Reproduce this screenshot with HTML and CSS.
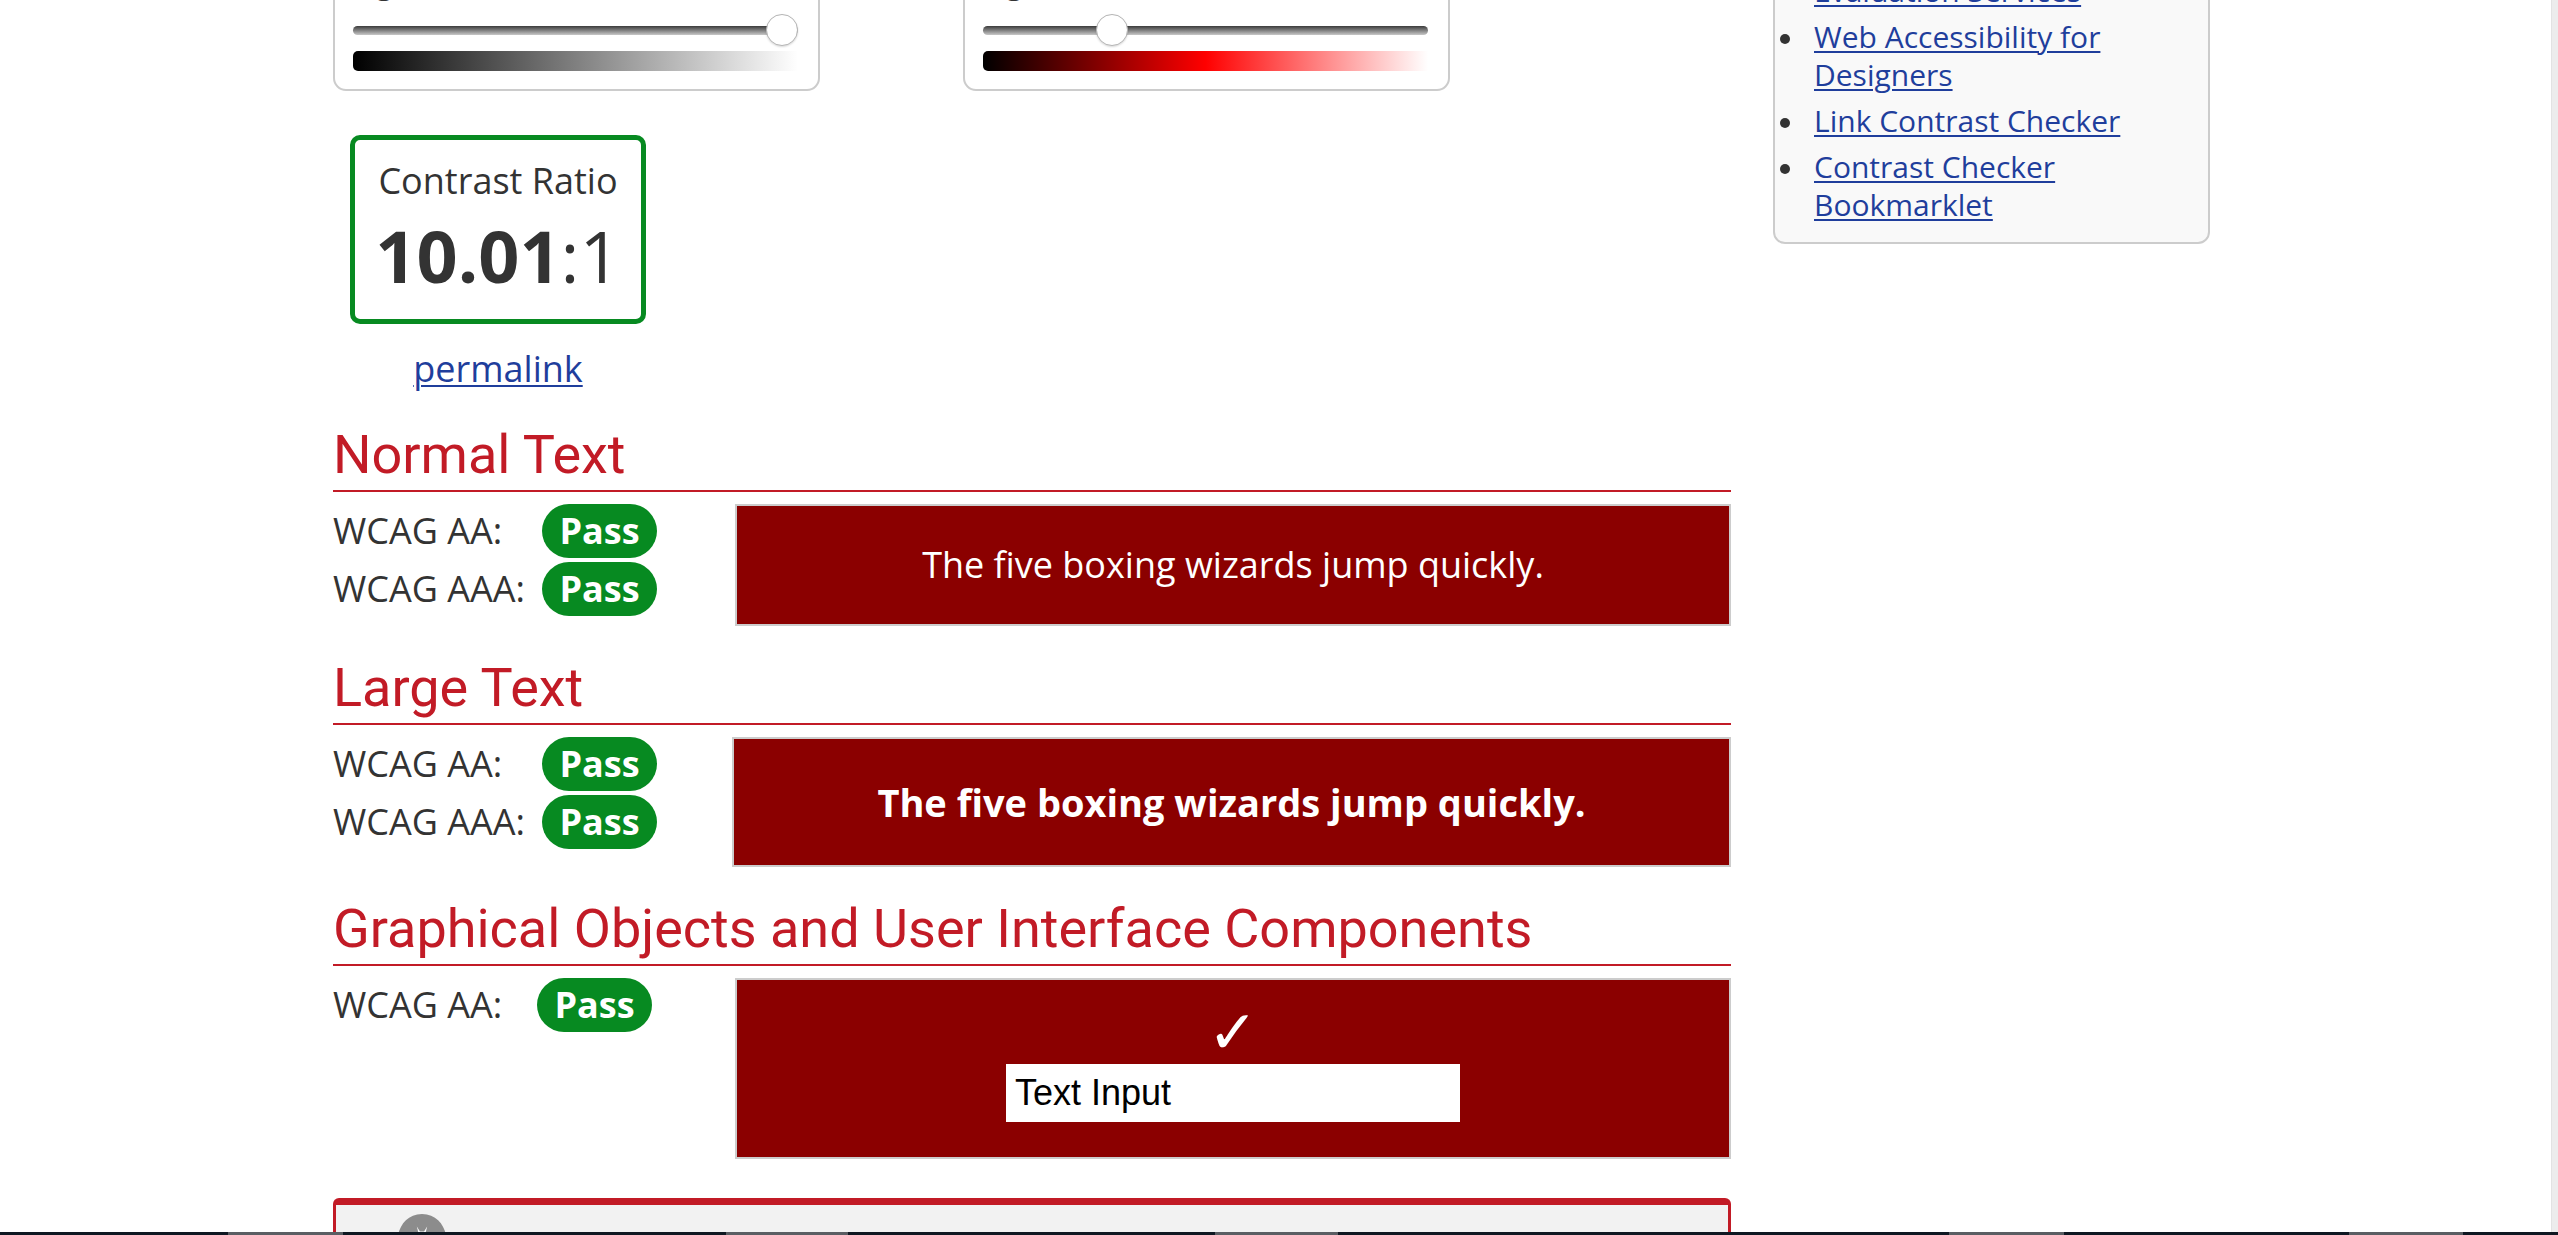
FILE: index.html
```html
<!DOCTYPE html>
<html lang="en">
<head>
<meta charset="utf-8">
<title>Contrast Checker</title>
<link rel="stylesheet" href="styles.css">
</head>
<body>
<div class="layout">
  <main class="main">
    <div class="pickers">
      <div class="picker">
        <div class="picker-label">Lightness</div>
        <div class="track"><span class="thumb" style="left: calc((100% - 32px) * 1)"></span></div>
        <div class="ramp ramp-gray"></div>
      </div>
      <div class="picker">
        <div class="picker-label">Lightness</div>
        <div class="track"><span class="thumb" style="left: calc((100% - 32px) * 0.273)"></span></div>
        <div class="ramp ramp-red"></div>
      </div>
    </div>

    <div class="result">
      <div class="ratio-box">
        <div class="ratio-label">Contrast Ratio</div>
        <div class="ratio-value"><b>10.01</b>:1</div>
      </div>
      <a class="permalink" href="#">permalink</a>
    </div>

    <section class="check check-first">
      <h2 class="check-title">Normal Text</h2>
      <div class="check-row">
        <div class="levels">
          <span class="level-name">WCAG AA:</span><span class="pass">Pass</span>
          <span class="level-name">WCAG AAA:</span><span class="pass">Pass</span>
        </div>
        <div class="sample sample-normal">The five boxing wizards jump quickly.</div>
      </div>
    </section>

    <section class="check">
      <h2 class="check-title">Large Text</h2>
      <div class="check-row">
        <div class="levels">
          <span class="level-name">WCAG AA:</span><span class="pass">Pass</span>
          <span class="level-name">WCAG AAA:</span><span class="pass">Pass</span>
        </div>
        <div class="sample sample-large">The five boxing wizards jump quickly.</div>
      </div>
    </section>

    <section class="check">
      <h2 class="check-title">Graphical Objects and User Interface Components</h2>
      <div class="check-row">
        <div class="levels levels-single">
          <span class="level-name">WCAG AA:</span><span class="pass">Pass</span>
        </div>
        <div class="sample sample-ui">
          <div class="sample-check">&#10003;</div>
          <div class="sample-input">Text Input</div>
        </div>
      </div>
    </section>

    <div class="notice">
      <span class="notice-icon">
        <svg width="50" height="58" viewBox="0 0 48 56" aria-hidden="true">
          <path d="M24 0 C8 0 0 14 0 28 C0 44 10 56 24 56 C38 56 48 44 48 28 C48 14 40 0 24 0 Z" fill="#8c8c8c"/>
          <path d="M19 12 L22 24 L26 24 L29 12 L26 17 L22 17 Z" fill="#ffffff"/>
        </svg>
      </span>
    </div>
  </main>

  <aside class="aside">
    <ul class="links">
      <li><a href="#">Web Accessibility Evaluation Services</a></li>
      <li><a href="#">Web Accessibility for Designers</a></li>
      <li><a href="#">Link Contrast Checker</a></li>
      <li><a href="#">Contrast Checker Bookmarklet</a></li>
    </ul>
  </aside>
</div>

<div class="dock">
  <span class="dock-item dock-a"></span>
  <span class="dock-item dock-b"></span>
  <span class="dock-item dock-c"></span>
  <span class="dock-item dock-d"></span>
  <span class="dock-item dock-e"></span>
</div>
<div class="scrollbar"></div>
</body>
</html>
```

FILE: styles.css
```css
html, body {
  margin: 0;
  padding: 0;
  height: 100%;
  overflow: hidden;
  background: #ffffff;
}

body {
  font-family: "Open Sans", "Noto Sans", sans-serif;
  color: #333333;
  font-size: 36px;
}

a {
  color: #1f3e9c;
  text-decoration: underline;
  text-underline-offset: 3px;
  text-decoration-thickness: 2px;
}

.layout {
  display: flex;
  align-items: flex-start;
  gap: 42px;
  padding-left: 333px;
  margin-top: -78px;
}

.main {
  width: 1398px;
  flex: none;
  padding-top: 38px;
}

/* ---------- color pickers ---------- */
.pickers {
  display: flex;
  gap: 143px;
}

.picker {
  box-sizing: border-box;
  width: 487px;
  border: 2px solid #cccccc;
  border-radius: 13px;
  padding: 0 20px 18px 18px;
}

.picker-label {
  font-size: 30px;
  line-height: 42px;
}

.track {
  position: relative;
  margin-top: 22px;
  height: 9px;
  border-radius: 5px;
  background: linear-gradient(to bottom, #3c3c3c 0%, #7a7a7a 45%, #c8c8c8 100%);
}

.thumb {
  position: absolute;
  top: -12px;
  width: 32px;
  height: 32px;
  box-sizing: border-box;
  border-radius: 50%;
  background: #ffffff;
  border: 1px solid #b5b5b5;
  box-shadow: 0 1px 2px rgba(0, 0, 0, 0.15);
}

.ramp {
  margin-top: 16px;
  height: 20px;
  border-radius: 5px 0 0 5px;
}

.ramp-gray {
  background: linear-gradient(to right, #000000, #ffffff);
}

.ramp-red {
  background: linear-gradient(to right, #000000, #ff0000 50%, #ffffff);
}

/* ---------- ratio ---------- */
.result {
  width: 296px;
  margin: 44px 0 0 17px;
  display: flex;
  flex-direction: column;
  align-items: center;
}

.ratio-box {
  box-sizing: border-box;
  width: 296px;
  border: 5px solid #078a21;
  border-radius: 10px;
  padding: 16px 0 24px;
  text-align: center;
}

.ratio-label {
  font-size: 36px;
  line-height: 50px;
}

.ratio-value {
  margin-top: 9px;
  font-size: 72px;
  line-height: 80px;
}

.ratio-value b {
  font-weight: 700;
}

.permalink {
  margin-top: 20px;
  font-size: 36px;
  line-height: 50px;
}

/* ---------- checks ---------- */
.check {
  margin-top: 30px;
}

.check-first {
  margin-top: 29px;
}

.check-title {
  margin: 0;
  font-family: Roboto, "Open Sans", sans-serif;
  font-weight: 400;
  font-size: 54px;
  line-height: 64px;
  color: #c21b26;
  padding-bottom: 3px;
  border-bottom: 2px solid #c21b26;
}

.check-row {
  display: flex;
  align-items: flex-start;
  padding-top: 12px;
}

.levels {
  display: grid;
  grid-template-columns: 209px auto;
  row-gap: 4px;
  align-items: center;
}

.levels-single {
  grid-template-columns: 204px auto;
}

.level-name {
  font-size: 36px;
  line-height: 54px;
  white-space: nowrap;
}

.pass {
  box-sizing: border-box;
  display: inline-block;
  width: 115px;
  height: 54px;
  line-height: 54px;
  border-radius: 27px;
  background: #078a21;
  color: #ffffff;
  font-weight: 700;
  font-size: 36px;
  text-align: center;
}

.sample {
  box-sizing: border-box;
  width: 996px;
  margin-left: auto;
  background: #8b0000;
  border: 2px solid #cccccc;
  color: #ffffff;
  text-align: center;
}

.sample-normal {
  padding: 34px 0;
  font-size: 36px;
  line-height: 50px;
}

.sample-large {
  width: 999px;
  padding: 37px 0;
  font-size: 38px;
  line-height: 52px;
  font-weight: 700;
}

.sample-ui {
  padding: 30px 0 35px;
  display: flex;
  flex-direction: column;
  align-items: center;
}

.sample-check {
  font-family: "DejaVu Sans", sans-serif;
  font-size: 60px;
  line-height: 44px;
  height: 44px;
  margin-left: 0;
}

.sample-input {
  box-sizing: border-box;
  margin-top: 10px;
  width: 454px;
  height: 58px;
  padding: 0 9px;
  background: #ffffff;
  color: #000000;
  text-align: left;
  font-family: "Liberation Sans", Arial, sans-serif;
  font-size: 36px;
  line-height: 58px;
}

/* ---------- notice ---------- */
.notice {
  margin-top: 39px;
  border: 3px solid #c21b26;
  border-top-width: 7px;
  border-bottom: 0;
  border-radius: 6px 6px 0 0;
  background: #f2f2f2;
  padding: 9px 0 60px 61px;
}

.notice-icon {
  display: block;
  width: 50px;
  height: 58px;
}

/* ---------- sidebar ---------- */
.aside {
  box-sizing: border-box;
  width: 437px;
  flex: none;
  background: #f9f9f9;
  border: 2px solid #cccccc;
  border-radius: 12px;
  padding: 10px 34px 18px 0;
}

.links {
  margin: 0;
  padding: 0 0 0 39px;
  list-style: none;
  font-size: 30px;
  line-height: 38px;
}

.links li {
  position: relative;
  margin-bottom: 8px;
}

.links li::before {
  content: "";
  position: absolute;
  left: -34px;
  top: 16px;
  width: 10px;
  height: 10px;
  border-radius: 50%;
  background: #333333;
}

.links li:last-child {
  margin-bottom: 0;
}

/* ---------- viewport chrome ---------- */
.dock {
  position: fixed;
  left: 0;
  right: 0;
  bottom: 0;
  height: 3px;
  background: #0f1822;
}

.dock-item {
  position: absolute;
  top: 0;
  height: 3px;
  background: #5a5e63;
}

.dock-a { left: 228px; width: 115px; }
.dock-b { left: 726px; width: 122px; }
.dock-c { left: 1215px; width: 123px; }
.dock-d { left: 1949px; width: 115px; }
.dock-e { left: 2349px; width: 114px; }

.scrollbar {
  position: fixed;
  top: 0;
  right: 0;
  bottom: 3px;
  width: 6px;
  background: #ececec;
  border-left: 1px solid #e2e2e2;
}
```
